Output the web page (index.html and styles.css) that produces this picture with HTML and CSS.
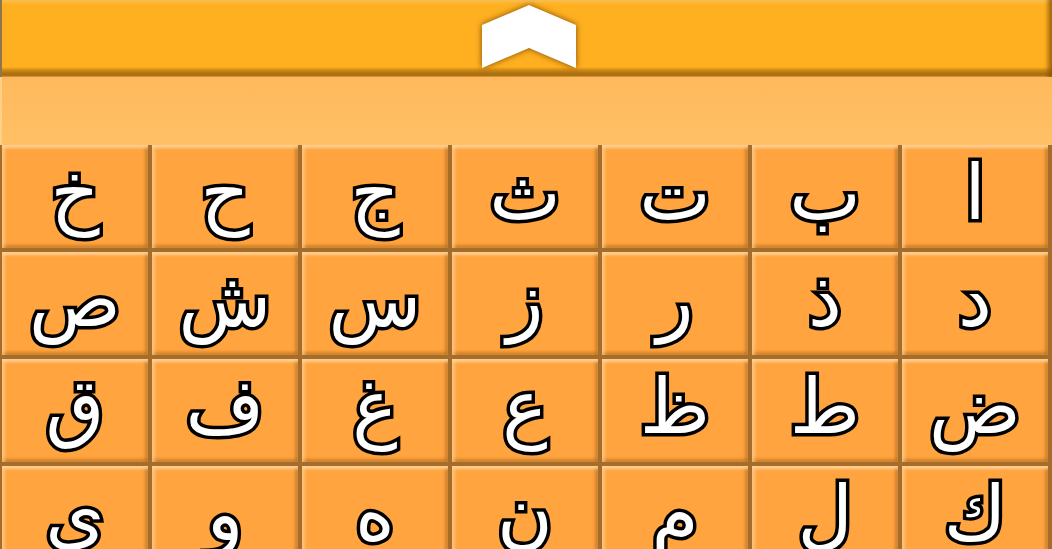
FILE: index.html
```html
<!DOCTYPE html>
<html lang="ar">
<head>
<meta charset="utf-8">
<title>Arabic letters</title>
<link rel="stylesheet" href="styles.css">
</head>
<body>
<div class="app">
  <header class="topbar">
    <svg class="chevron" width="100" height="70" viewBox="0 0 100 70" aria-hidden="true">
      <polygon points="3,68 3,25 50,5 97,25 97,68 50,48" fill="#ffffff"/>
    </svg>
  </header>
  <div class="band"></div>
  <main class="keys" dir="rtl">
    <div class="key">ا</div><div class="key">ب</div><div class="key">ت</div><div class="key">ث</div><div class="key">ج</div><div class="key">ح</div><div class="key">خ</div>
    <div class="key">د</div><div class="key">ذ</div><div class="key">ر</div><div class="key">ز</div><div class="key">س</div><div class="key">ش</div><div class="key">ص</div>
    <div class="key">ض</div><div class="key">ط</div><div class="key">ظ</div><div class="key">ع</div><div class="key">غ</div><div class="key">ف</div><div class="key">ق</div>
    <div class="key">ك</div><div class="key">ل</div><div class="key">م</div><div class="key">ن</div><div class="key">ه</div><div class="key">و</div><div class="key">ي</div>
  </main>
</div>
</body>
</html>
```
FILE: styles.css
```css
html, body {
  margin: 0;
  padding: 0;
  width: 1052px;
  height: 549px;
  overflow: hidden;
  background: #ffbd62;
}

.app {
  display: flex;
  flex-direction: column;
  width: 1052px;
  height: 549px;
  overflow: hidden;
}

.topbar {
  flex: 0 0 77px;
  display: flex;
  justify-content: center;
  align-items: flex-start;
  background: linear-gradient(to bottom,
    #ffcc70 0px, #ffb424 3px, #ffb020 6px, #ffb020 67px,
    #d08a14 70px, #a96d0f 74px, #b07818 76px, #ffb95c 77px);
  box-shadow: inset 2px 0 0 #8f7450, inset -6px 0 4px -2px rgba(130, 80, 5, 0.75);
}

.chevron {
  display: block;
  margin-left: 5px;
  filter: drop-shadow(0 0 3px rgba(110, 60, 0, 0.9));
}

.band {
  flex: 0 0 68px;
  background: linear-gradient(to bottom, #ffb95c, #ffc066);
  box-shadow: inset 2px 0 0 rgba(255, 220, 160, 0.6);
}

.keys {
  flex: 1 1 auto;
  display: grid;
  grid-template-columns: repeat(7, 1fr);
  grid-auto-rows: 103px;
  gap: 4px;
  padding: 0 4px 0 2px;
  background: #a66c2a;
  overflow: hidden;
}

.key {
  background: #ffa43f;
  box-shadow:
    inset 0 4px 3px -1px rgba(255, 214, 160, 0.85),
    inset 4px 0 3px -1px rgba(255, 214, 160, 0.6),
    inset 0 -4px 3px -1px rgba(170, 100, 25, 0.55),
    inset -4px 0 3px -1px rgba(170, 100, 25, 0.55);
  display: flex;
  align-items: center;
  justify-content: center;
  padding-bottom: 8px;
  font-family: "DejaVu Sans", sans-serif;
  font-size: 76px;
  line-height: 1;
  color: #ffffff;
  -webkit-text-stroke: 7px #000000;
  paint-order: stroke fill;
}
```
